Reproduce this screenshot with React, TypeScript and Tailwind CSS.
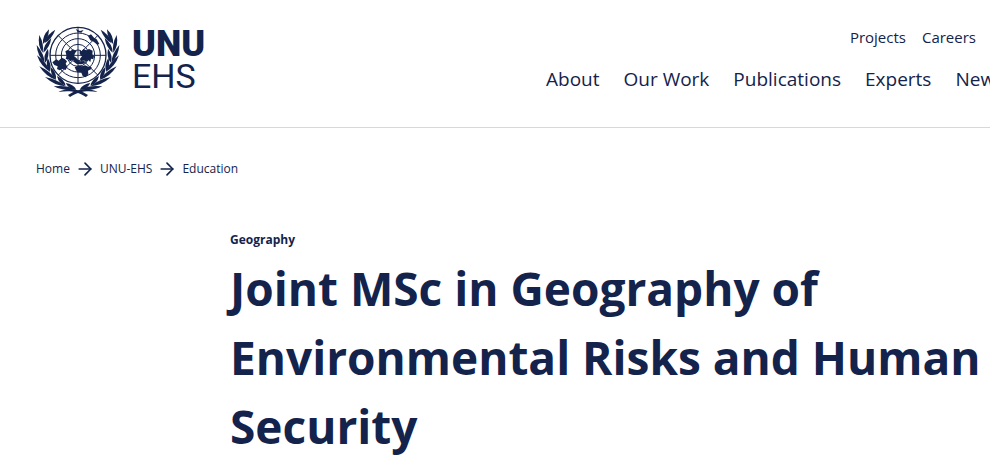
import React from "react";
import { ArrowRight } from "lucide-react";

type Link = {
  label: string,
  href: string
};

const topLinks: Link[] = [
  { label: "Projects", href: "#projects" },
  { label: "Careers", href: "#careers" },
];

const mainLinks: Link[] = [
  { label: "About", href: "#about" },
  { label: "Our Work", href: "#our-work" },
  { label: "Publications", href: "#publications" },
  { label: "Experts", href: "#experts" },
  { label: "News", href: "#news" },
];

const crumbs: Link[] = [
  { label: "Home", href: "#home" },
  { label: "UNU-EHS", href: "#ehs" },
  { label: "Education", href: "#education" },
];

// olive leaves, each from its tip to its base: [tipX, tipY, baseX, baseY]
const leaves = [
  [73, 29, 40, 70],
  [61, 54, 37, 98],
  [51, 86, 43, 128],
  [50, 114, 57, 155],
  [60, 142, 75, 178],
  [78, 168, 104, 197],
  [104, 189, 136, 209],
  [54, 28, 36, 72],
  [25, 45, 35, 98],
  [17, 75, 41, 128],
  [18, 106, 57, 155],
  [25, 139, 76, 180],
  [42, 171, 104, 199],
  [68, 199, 134, 208],
];

const leafPath = ([tx, ty, bx, by]: number[]) => {
  const dx = bx - tx;
  const dy = by - ty;
  const len = Math.hypot(dx, dy);
  const nx = (-dy / len) * 12;
  const ny = (dx / len) * 12;
  const mx = tx + dx * 0.55;
  const my = ty + dy * 0.55;
  return `M${tx} ${ty}Q${mx + nx} ${my + ny} ${bx} ${by}Q${mx - nx * 0.8} ${my - ny * 0.8} ${tx} ${ty}Z`;
};

const Branch = () => (
  <g fill="currentColor">
    {leaves.map((leaf, i) => (
      <path key={i} d={leafPath(leaf)} />
    ))}
    <path d="M82 216C106 205 136 203 171 225L165 231C135 212 112 211 82 216Z" />
  </g>
);

const Emblem = () => (
  <svg viewBox="15 18 252 216" className="h-18 w-21 shrink-0" aria-hidden="true">
    <g fill="none" stroke="currentColor" strokeWidth="3">
      <circle cx="141" cy="106" r="84" strokeWidth="4" />
      <circle cx="141" cy="106" r="67" />
      <circle cx="141" cy="106" r="50" />
      <circle cx="141" cy="106" r="33" />
      <circle cx="141" cy="106" r="16" />
      <path d="M141 22V190M57 106H225M82 47L129 94M200 47L153 94M82 165L129 118M200 165L153 118" />
    </g>
    <g fill="currentColor">
      <path d="M146 91L152 94L157 87L166 91L174 87L185 92L184 103L189 109L187 118L180 116L178 126L170 119L165 127L158 120L150 125L147 116L153 109L146 102Z" />
      <path d="M103 94L110 90L118 93L126 88L137 93L132 100L129 108L136 114L142 121L132 124L126 120L117 124L112 118L104 117L107 107Z" />
      <path d="M64 127L76 118L83 122L92 113L101 117L108 124L104 131L109 140L104 150L95 147L86 151L78 147L80 139L70 135Z" />
      <path d="M131 142L143 136L153 139L162 136L172 140L182 141L180 148L171 152L172 162L164 172L155 168L151 158L139 157L135 150Z" />
      <path d="M171 48L180 43L189 53L197 58L205 72L199 74L188 65L178 61Z" />
      <path d="M124 122L135 120L147 124L158 123L163 130L151 133L137 132Z" />
      <path d="M134 27L147 33L158 30L151 38L140 36Z" />
    </g>
    <Branch />
    <g transform="translate(282 0) scale(-1 1)">
      <Branch />
    </g>
  </svg>
);

export default function App() {
  return (
    <div className="overflow-x-hidden bg-white font-['Open_Sans','Noto_Sans',sans-serif] text-[#14234b]">
      <header className="flex items-start justify-between border-b border-[#d8d8d8] pt-6 pb-[29px] pl-9">
        <a href="#home" className="flex items-center gap-3 pt-0.5" aria-label="UNU EHS">
          <Emblem />
          <span className="flex flex-col pb-1 font-[Roboto,sans-serif] leading-8">
            <span className="text-[36px] font-black">UNU</span>
            <span className="text-[34px]">EHS</span>
          </span>
        </a>
        <div className="w-[444px] shrink-0">
          <nav aria-label="Secondary" className="flex justify-end gap-4 pr-3.5 text-[15px] leading-[26px]">
            {topLinks.map((link) => (
              <a key={link.label} href={link.href}>{link.label}</a>
            ))}
          </nav>
          <nav aria-label="Main" className="flex gap-6 pt-2.5 text-[19px] leading-[38px] whitespace-nowrap">
            {mainLinks.map((link) => (
              <a key={link.label} href={link.href}>{link.label}</a>
            ))}
          </nav>
        </div>
      </header>

      <nav aria-label="Breadcrumb" className="px-9 pt-[31px]">
        <ol className="flex items-center gap-[5px] text-[12px] leading-5">
          {crumbs.map((crumb, i) => (
            <li key={crumb.label} className="flex items-center gap-[5px]">
              {i > 0 && <ArrowRight className="size-5" strokeWidth={2} />}
              <a href={crumb.href}>{crumb.label}</a>
            </li>
          ))}
        </ol>
      </nav>

      <main className="pt-[51px] pl-[230px]">
        <p className="text-[12px] leading-5 font-bold">Geography</p>
        <h1 className="max-w-[760px] pt-1 text-[46px] leading-[69px] font-bold">
          Joint MSc in Geography of Environmental Risks and Human Security
        </h1>
      </main>
    </div>
  );
}
